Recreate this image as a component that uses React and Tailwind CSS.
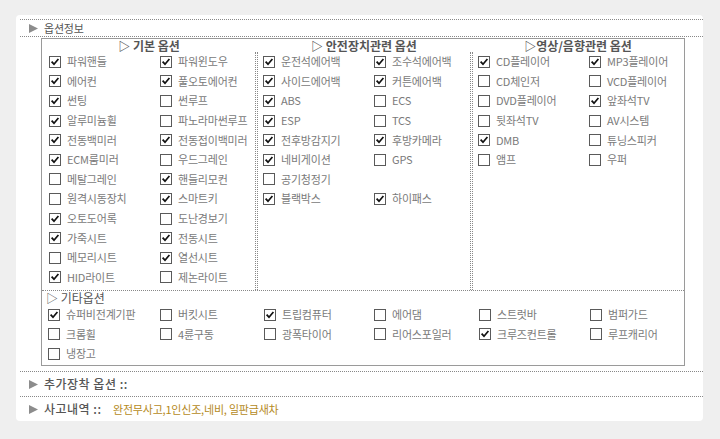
const basic = [
  [["파워핸들", 1], ["파워윈도우", 1]],
  [["에어컨", 1], ["풀오토에어컨", 1]],
  [["썬팅", 1], ["썬루프", 0]],
  [["알루미늄휠", 1], ["파노라마썬루프", 0]],
  [["전동백미러", 1], ["전동접이백미러", 1]],
  [["ECM룸미러", 1], ["우드그레인", 0]],
  [["메탈그레인", 0], ["핸들리모컨", 1]],
  [["원격시동장치", 0], ["스마트키", 1]],
  [["오토도어록", 1], ["도난경보기", 0]],
  [["가죽시트", 1], ["전동시트", 1]],
  [["메모리시트", 0], ["열선시트", 1]],
  [["HID라이트", 1], ["제논라이트", 0]],
]

const safety = [
  [["운전석에어백", 1], ["조수석에어백", 1]],
  [["사이드에어백", 1], ["커튼에어백", 1]],
  [["ABS", 1], ["ECS", 0]],
  [["ESP", 1], ["TCS", 0]],
  [["전후방감지기", 1], ["후방카메라", 1]],
  [["네비게이션", 1], ["GPS", 0]],
  [["공기청정기", 0], null],
  [["블랙박스", 1], ["하이패스", 1]],
]

const media = [
  [["CD플레이어", 1], ["MP3플레이어", 1]],
  [["CD체인저", 0], ["VCD플레이어", 0]],
  [["DVD플레이어", 0], ["앞좌석TV", 1]],
  [["뒷좌석TV", 0], ["AV시스템", 0]],
  [["DMB", 1], ["튜닝스피커", 0]],
  [["앰프", 0], ["우퍼", 0]],
]

const etc = [
  [["슈퍼비전계기판", 1], ["버킷시트", 0], ["트립컴퓨터", 1], ["에어댐", 0], ["스트럿바", 0], ["범퍼가드", 0]],
  [["크롬휠", 0], ["4륜구동", 0], ["광폭타이어", 0], ["리어스포일러", 0], ["크루즈컨트롤", 1], ["루프캐리어", 0]],
  [["냉장고", 0]],
]

function Box ({ checked }) {
  return (
    <svg width="12" height="12" viewBox="0 0 12 12" className="shrink-0">
      <rect x="0.5" y="0.5" width="11" height="11" fill="white" stroke="#5a5a5a" />
      {checked ? <path d="M2.6 5.6 L5 8.2 L9.4 3" fill="none" stroke="#111" strokeWidth="1.7" /> : null}
    </svg>
  )
}

function Item ({ item }) {
  if (!item) return <div />
  return (
    <div className="flex flex-row items-center h-[19.6px]">
      <Box checked={item[1]} />
      <span className="ml-[6px] text-[11px] tracking-[-0.2px] text-[#7a7a7a] whitespace-nowrap leading-none">{item[0]}</span>
    </div>
  )
}

function Tri () {
  return (
    <svg width="9" height="9" viewBox="0 0 9 9" className="shrink-0">
      <path d="M0 0 L9 4.5 L0 9 Z" fill="#8c8c8c" />
    </svg>
  )
}

function Column ({ rows, className }) {
  return (
    <div className={className}>
      {rows.map((r, i) => {
        return (
          <div key={i} className="grid grid-cols-[111px_1fr]">
            <Item item={r[0]} />
            <Item item={r[1]} />
          </div>
        )
      })}
    </div>
  )
}

export default function App () {
  return (
    <div className="w-[720px] h-[439px] bg-[#efefef] pt-[15px] pl-[16px]" style={{ fontFamily: '"Noto Sans CJK KR", "Noto Sans", sans-serif' }}>
      <div className="w-[687px] h-[406px] bg-white rounded-[4px] pt-[4px] pl-[4px]">

        <div className="flex flex-row items-center h-[18px] border-y border-dotted border-[#888] pl-[9px]">
          <Tri />
          <span className="ml-[6px] text-[11px] tracking-[-0.2px] text-[#555] leading-none">옵션정보</span>
        </div>

        <div className="mt-[1px] ml-[21px] w-[644px] h-[328px] border border-[#9a9a9a]">
          <div className="flex flex-row h-[13px] text-[12px] font-semibold text-[#555] leading-[13px] whitespace-pre">
            <div className="w-[214px] text-center">▷ 기본 옵션</div>
            <div className="ml-[1px] w-[214px] text-center">▷ 안전장치관련 옵션</div>
            <div className="ml-[1px] flex-1 text-center">▷영상/음향관련 옵션</div>
          </div>

          <div className="flex flex-row h-[239px] border-b border-dotted border-[#888]">
            <Column rows={basic} className="w-[214px] border-r border-dotted border-[#888] pl-[7px]" />
            <Column rows={safety} className="ml-[1px] w-[214px] border-x border-dotted border-[#888] pl-[5px]" />
            <Column rows={media} className="ml-[1px] flex-1 border-l border-dotted border-[#888] pl-[5px]" />
          </div>

          <div className="pl-[4px] h-[14px] flex flex-row items-center text-[12px] text-[#555] leading-none whitespace-pre">
            ▷ 기타옵션
          </div>
          <div className="pl-[6px]">
            {etc.map((r, i) => {
              return (
                <div key={i} className="grid grid-cols-[112px_104px_110px_105px_111px_1fr]">
                  {r.map((it, j) => <Item key={j} item={it} />)}
                </div>
              )
            })}
          </div>
        </div>

        <div className="mt-[5px] flex flex-row items-center h-[26px] border-y border-dotted border-[#888] pl-[9px]">
          <Tri />
          <span className="ml-[6px] text-[12px] tracking-[0.5px] text-[#555] font-medium leading-none whitespace-pre">추가장착 옵션 ::</span>
        </div>

        <div className="flex flex-row items-center h-[24px] pl-[9px]">
          <Tri />
          <span className="ml-[6px] w-[69px] text-[12px] tracking-[0.5px] text-[#555] font-medium leading-none whitespace-pre">사고내역 ::</span>
          <span className="text-[11px] tracking-[-0.2px] text-[#b58a1c] leading-none whitespace-pre">완전무사고,1인신조,네비, 일판급새차</span>
        </div>

      </div>
    </div>
  )
}
